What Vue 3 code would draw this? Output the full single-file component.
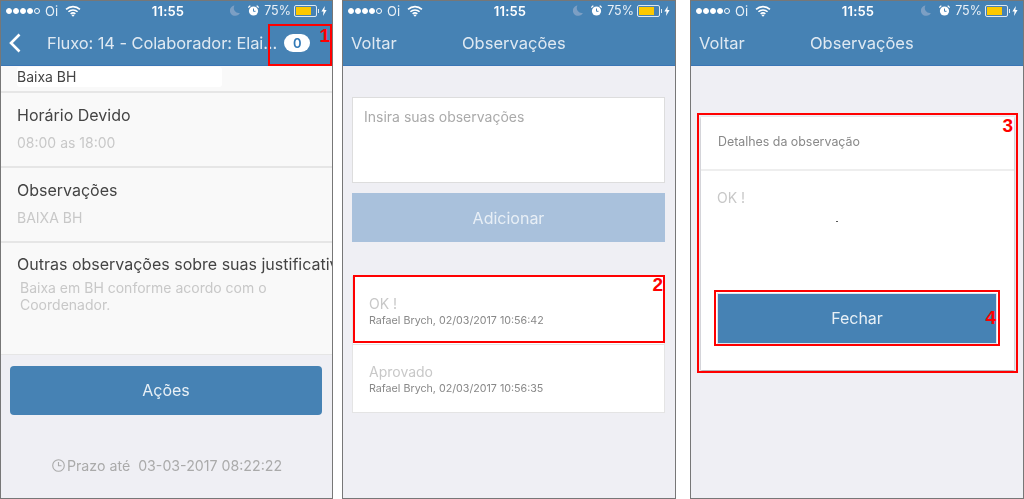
<script setup>
const phones = ['detail', 'list', 'modal']

const rows = [
    { label: 'Horário Devido', value: '08:00 as 18:00' },
    { label: 'Observações', value: 'BAIXA BH' }
]

const notes = [
    { id: 1, text: 'OK !', meta: 'Rafael Brych, 02/03/2017 10:56:42' },
    { id: 2, text: 'Aprovado', meta: 'Rafael Brych, 02/03/2017 10:56:35' }
]
</script>

<template>
    <div class="page">
        <div v-for="phone in phones" :key="phone" class="phone" :class="phone">
            <div class="header">
                <div class="status">
                    <div class="status-left">
                        <span class="dots"><i></i><i></i><i></i><i></i><i class="empty"></i></span>
                        <span class="carrier">Oi</span>
                        <svg class="wifi" width="16" height="12" viewBox="0 0 15 11">
                            <path d="M1 4a9.5 9.5 0 0 1 13 0M3.2 6.2a6.3 6.3 0 0 1 8.6 0M5.3 8.2a3.3 3.3 0 0 1 4.4 0" fill="none" stroke="#fff" stroke-width="1.5" />
                            <path d="M7.5 11l-1.4-1.6a2 2 0 0 1 2.8 0z" fill="#fff" />
                        </svg>
                    </div>
                    <div class="clock">11:55</div>
                    <div class="status-right">
                        <svg width="10" height="11" viewBox="0 0 10 11">
                            <path d="M4.5 0.5a5.2 5.2 0 1 0 5.3 7.4a5 5 0 0 1-5.3-7.4z" fill="#7c9fc4" />
                        </svg>
                        <svg class="alarm" width="11" height="11" viewBox="0 0 11 11">
                            <circle cx="5.5" cy="6" r="4.6" fill="#fff" />
                            <path d="M5.5 3.5v2.8h2" fill="none" stroke="#4682b4" stroke-width="1" />
                            <path d="M0.3 2.6l2-2M10.7 2.6l-2-2" stroke="#fff" stroke-width="1.3" />
                        </svg>
                        <span class="percent">75%</span>
                        <span class="battery"><span class="battery-fill"></span></span>
                        <span class="battery-tip"></span>
                        <svg width="6" height="10" viewBox="0 0 6 10">
                            <path d="M3.8 0L0.4 5.6h2.1L2 10l3.6-6H3.4z" fill="#fff" />
                        </svg>
                    </div>
                </div>

                <div v-if="phone === 'detail'" class="nav">
                    <svg class="back" width="13" height="20" viewBox="0 0 13 20">
                        <path d="M11.5 1.5L3 10l8.5 8.5" fill="none" stroke="#fff" stroke-width="2.6" />
                    </svg>
                    <span class="nav-title">Fluxo: 14 - Colaborador: Elai...</span>
                    <span class="count">0</span>
                </div>
                <div v-else class="nav">
                    <span class="nav-back">Voltar</span>
                    <span class="nav-center">Observações</span>
                </div>
            </div>

            <div v-if="phone === 'detail'" class="body">
                <div class="fields">
                    <div class="first-row"><span class="first-text">Baixa BH</span></div>
                    <div v-for="row in rows" :key="row.label" class="field">
                        <div class="field-label">{{ row.label }}</div>
                        <div class="field-value">{{ row.value }}</div>
                    </div>
                    <div class="field last">
                        <div class="field-label nowrap">Outras observações sobre suas justificativas</div>
                        <div class="field-text">Baixa em BH conforme acordo com o Coordenador.</div>
                    </div>
                </div>
                <div class="action">Ações</div>
                <div class="deadline">
                    <svg width="15" height="15" viewBox="0 0 15 15">
                        <circle cx="7.5" cy="7.5" r="5.8" fill="none" stroke="#aaa" stroke-width="1.1" />
                        <path d="M7.5 4v3.7h3" fill="none" stroke="#aaa" stroke-width="1.1" />
                    </svg>
                    <span>Prazo até&nbsp; 03-03-2017 08:22:22</span>
                </div>
            </div>

            <div v-else-if="phone === 'list'" class="body list-body">
                <div class="input">Insira suas observações</div>
                <div class="add">Adicionar</div>
                <div class="notes">
                    <div v-for="note in notes" :key="note.id" class="note">
                        <div class="note-text">{{ note.text }}</div>
                        <div class="note-meta">{{ note.meta }}</div>
                    </div>
                </div>
            </div>

            <div v-else class="body modal-body">
                <div class="card">
                    <div class="card-title">Detalhes da observação</div>
                    <div class="card-text">OK !<span class="speck"></span></div>
                    <div class="close">Fechar</div>
                </div>
            </div>
        </div>

        <!-- numbered red marks drawn over the screenshots -->
        <div class="mark mark-1"><b>1</b></div>
        <div class="mark mark-2"><b>2</b></div>
        <div class="mark mark-3"><b>3</b></div>
        <div class="mark mark-4"><b>4</b></div>
    </div>
</template>

<style>
html,
body {
    margin: 0;
    background: #fff;
}
</style>

<style scoped>
.page {
    position: relative;
    display: flex;
    width: 1024px;
    height: 499px;
    overflow: hidden;
    font-family: Inter, "Liberation Sans", sans-serif;
    background: #fff;
}

.phone {
    display: flex;
    flex-direction: column;
    width: 334px;
    height: 499px;
    box-sizing: border-box;
    border: 1px solid #777;
    background: #efeff4;
    overflow: hidden;
    filter: blur(0.3px);
}

.phone.detail {
    width: 333px;
}

.phone.list {
    margin-left: 9px;
}

.phone.modal {
    margin-left: 14px;
}

.header {
    height: 65px;
    flex-shrink: 0;
    box-sizing: border-box;
    border-bottom: 1px solid #3b76b5;
    background: #4682b4;
    color: #fff;
}

.status {
    position: relative;
    display: flex;
    justify-content: space-between;
    align-items: center;
    height: 19px;
    padding: 0 5px;
    font-size: 13px;
}

.status-left,
.status-right {
    display: flex;
    align-items: center;
}

.dots {
    display: flex;
    gap: 1px;
}

.dots i {
    width: 6px;
    height: 6px;
    border: 0.5px solid #fff;
    border-radius: 50%;
    background: #fff;
    box-sizing: border-box;
}

.dots i.empty {
    background: transparent;
}

.carrier {
    margin-left: 5px;
    color: #eaf1f7;
}

.wifi {
    margin-left: 7px;
}

.clock {
    position: absolute;
    left: 150px;
    width: 34px;
    text-align: center;
    font-weight: 600;
    letter-spacing: 0.2px;
}

.alarm {
    margin-left: 8px;
}

.percent {
    margin-left: 5px;
    font-size: 12.5px;
    color: #eaf1f7;
}

.battery {
    display: block;
    width: 19px;
    height: 8px;
    margin-left: 3px;
    padding: 1px;
    border: 1px solid #dfe9f2;
    border-radius: 2px;
    box-sizing: content-box;
}

.battery-fill {
    display: block;
    width: 78%;
    height: 100%;
    background: #fcc800;
}

.battery-tip {
    width: 1px;
    height: 4px;
    margin: 0 2px 0 1px;
    background: #dfe9f2;
}

.nav {
    display: flex;
    align-items: center;
    height: 46px;
    font-size: 16.5px;
    color: #dfe9f2;
}

.back {
    margin-left: 7px;
}

.nav-title {
    margin-left: 26px;
    white-space: nowrap;
    letter-spacing: -0.1px;
}

.count {
    width: 26px;
    height: 18px;
    margin-left: 7px;
    border-radius: 9px;
    background: #fff;
    color: #337ab7;
    font-size: 13px;
    font-weight: 600;
    line-height: 18px;
    text-align: center;
}

.nav-back {
    margin-left: 8px;
    width: 111px;
}

.body {
    flex: 1;
    display: flex;
    flex-direction: column;
}

.fields {
    height: 288px;
    background: #f9f9f9;
    border-bottom: 1px solid #e6e6e6;
}

.first-row {
    height: 24px;
    border-bottom: 2px solid #e6e6e6;
    font-size: 14px;
    color: #444;
    line-height: 20px;
}

.first-text {
    display: block;
    width: 205px;
    height: 20px;
    margin: 1px 0 0 16px;
    background: #fff;
    border-radius: 3px;
}

.field {
    height: 75px;
    padding: 11px 16px 0;
    box-sizing: border-box;
    border-bottom: 2px solid #e6e6e6;
}

.field.last {
    height: auto;
    border-bottom: 0;
    padding-top: 10px;
}

.field-label {
    font-size: 16px;
    color: #444;
    line-height: 22px;
}

.nowrap {
    white-space: nowrap;
}

.field-value {
    margin-top: 8px;
    font-size: 14px;
    color: #c8c8c8;
    line-height: 18px;
}

.field-text {
    margin: 5px 0 0 3px;
    font-size: 14px;
    color: #c8c8c8;
    line-height: 16.5px;
}

.action {
    height: 49px;
    margin: 11px 10px 0 9px;
    border-radius: 4px;
    background: #4682b4;
    color: #e8f0f6;
    font-size: 16px;
    line-height: 49px;
    text-align: center;
}

.deadline {
    display: flex;
    justify-content: center;
    align-items: center;
    gap: 1px;
    margin-top: 42px;
    font-size: 14.2px;
    color: #aaa;
}

.list-body {
    padding: 31px 10px 0 9px;
}

.input {
    height: 86px;
    padding: 10px 11px;
    box-sizing: border-box;
    border: 1px solid #ddd;
    background: #fff;
    color: #aaa;
    font-size: 14px;
    line-height: 18px;
}

.add {
    height: 49px;
    margin-top: 10px;
    background: #a9c1dc;
    color: #e8eff6;
    font-size: 16px;
    line-height: 50px;
    text-align: center;
}

.notes {
    margin-top: 34px;
    border: 1px solid #e4e4e4;
    background: #fff;
}

.note {
    height: 67px;
    padding: 18px 16px 0;
    box-sizing: border-box;
}

.note + .note {
    height: 68px;
    border-top: 1px solid #e4e4e4;
}

.note-text {
    font-size: 14px;
    color: #c8c8c8;
    line-height: 18px;
}

.note-meta {
    font-size: 10.7px;
    color: #888;
    line-height: 15px;
}

.modal-body {
    padding: 51px 9px 0 10px;
}

.card {
    display: flex;
    flex-direction: column;
    height: 253px;
    background: #fff;
    box-shadow: 0 1px 2px rgba(0, 0, 0, 0.35);
}

.card-title {
    height: 54px;
    padding-left: 17px;
    box-sizing: border-box;
    border-bottom: 2px solid #eee;
    color: #888;
    font-size: 12.4px;
    line-height: 50px;
}

.card-text {
    position: relative;
    flex: 1;
    padding: 18px 16px 0;
    color: #c8c8c8;
    font-size: 14px;
    line-height: 18px;
}

.speck {
    position: absolute;
    left: 135px;
    top: 50px;
    width: 2px;
    height: 1px;
    background: #555;
}

.close {
    height: 49px;
    margin: 0 17px 26px 16px;
    border: 1px solid #dbe6ef;
    background: #4682b4;
    color: #e8f0f6;
    font-size: 16px;
    line-height: 49px;
    text-align: center;
}

.mark {
    position: absolute;
    box-sizing: border-box;
    border: 2px solid #f00;
}

.mark b {
    position: absolute;
    color: #f00;
    font-family: "Liberation Sans", sans-serif;
    font-size: 19px;
    font-weight: 700;
    line-height: 19px;
}

.mark-1 {
    left: 268px;
    top: 24px;
    width: 64px;
    height: 42px;
}

.mark-1 b {
    right: 0;
    top: 0;
}

.mark-2 {
    left: 353px;
    top: 275px;
    width: 312px;
    height: 68px;
}

.mark-2 b {
    right: 0;
    top: -2px;
}

.mark-3 {
    left: 697px;
    top: 113px;
    width: 321px;
    height: 260px;
}

.mark-3 b {
    right: 3px;
    top: 1px;
}

.mark-4 {
    left: 714px;
    top: 290px;
    width: 286px;
    height: 56px;
}

.mark-4 b {
    right: 2px;
    top: 16px;
}
</style>
